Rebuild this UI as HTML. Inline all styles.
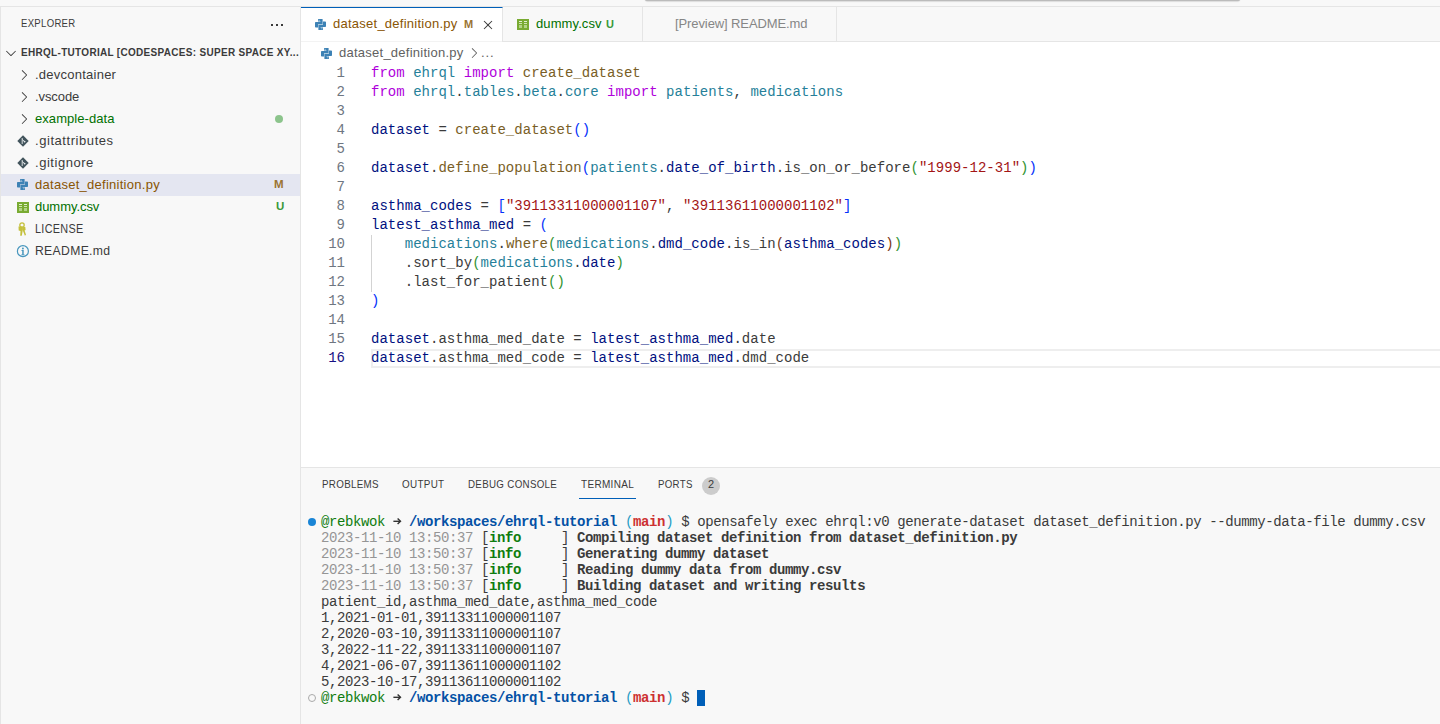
<!DOCTYPE html>
<html><head><meta charset="utf-8"><style>
*{margin:0;padding:0;box-sizing:border-box}
html,body{width:1440px;height:724px;overflow:hidden;background:#f8f8f8;font-family:"Liberation Sans",sans-serif;color:#3b3b3b}
.abs{position:absolute}
.t{position:absolute;white-space:pre;font-size:13px;line-height:22px;height:22px}
.code{position:absolute;left:371px;white-space:pre;font-family:"Liberation Mono",monospace;font-size:14px;letter-spacing:0.027px;line-height:19px;height:19px;color:#3b3b3b}
.ln{position:absolute;left:301px;width:44px;text-align:right;font-family:"Liberation Mono",monospace;font-size:14px;line-height:19px;color:#6e7681}
.ptab{position:absolute;top:474px;font-size:11px;line-height:20px;white-space:pre;color:#3b3b3b;letter-spacing:-0.5px}
.term{position:absolute;left:321px;white-space:pre;font-family:"Liberation Mono",monospace;font-size:14px;letter-spacing:-0.4px;line-height:16px;height:16px;color:#3b3b3b}
.k{color:#af00db}.ns{color:#267f99}.fn{color:#795e26}.v{color:#001080}.s{color:#a31515}
.b1{color:#0431fa}.b2{color:#319331}.b3{color:#7b3814}
</style></head><body>
<div class="abs" style="left:645px;top:-2px;width:595px;height:3.1px;background:#bbbbbb;border-radius:0 0 2px 2px;box-shadow:0 0.5px 1.2px rgba(0,0,0,.2)"></div>
<div class="abs" style="left:0;top:6px;width:1440px;height:718px;border-top:1px solid #e5e5e5;border-left:1px solid #e5e5e5"></div>
<div class="abs" style="left:1px;top:7px;width:300px;height:717px;background:#f8f8f8;border-right:1px solid #e5e5e5"></div>
<div class="abs" style="left:301px;top:42px;width:1139px;height:425px;background:#fff"></div>
<div class="abs" style="left:301px;top:467px;width:1139px;height:257px;background:#f8f8f8;border-top:1px solid #e5e5e5"></div>
<div class="abs" style="left:301px;top:7px;width:1139px;height:35px;background:#f8f8f8;border-bottom:1px solid #e5e5e5"></div>
<div class="t" style="left:21px;top:12px;font-size:11px;letter-spacing:0.35px;transform:scaleX(0.869);transform-origin:0 0">EXPLORER</div>
<div class="abs" style="left:271px;top:24px;width:2px;height:2px;background:#3b3b3b"></div>
<div class="abs" style="left:276px;top:24px;width:2px;height:2px;background:#3b3b3b"></div>
<div class="abs" style="left:281px;top:24px;width:2px;height:2px;background:#3b3b3b"></div>
<svg class="abs" style="left:3px;top:45px" width="16" height="16" viewBox="0 0 16 16"><path fill="#3b3b3b" d="M7.976 10.072l4.357-4.357.62.618L8.284 11h-.618L3 6.333l.619-.618 4.357 4.357z"/></svg>
<div class="t" style="left:21px;top:40.5px;font-size:11px;font-weight:bold;letter-spacing:0.35px;transform:scaleX(0.907);transform-origin:0 0">EHRQL-TUTORIAL [CODESPACES: SUPER SPACE XY...</div>
<svg class="abs" style="left:16px;top:67px" width="16" height="16" viewBox="0 0 16 16"><path fill="#3b3b3b" d="M10.072 8.024L5.715 3.667l.618-.62L11 7.716v.618L6.333 13l-.618-.619 4.357-4.357z"/></svg>
<div class="t" style="left:35px;top:64px;letter-spacing:0.24px">.devcontainer</div>
<svg class="abs" style="left:16px;top:89px" width="16" height="16" viewBox="0 0 16 16"><path fill="#3b3b3b" d="M10.072 8.024L5.715 3.667l.618-.62L11 7.716v.618L6.333 13l-.618-.619 4.357-4.357z"/></svg>
<div class="t" style="left:35px;top:86px;letter-spacing:-0.09px">.vscode</div>
<svg class="abs" style="left:16px;top:111px" width="16" height="16" viewBox="0 0 16 16"><path fill="#3b3b3b" d="M10.072 8.024L5.715 3.667l.618-.62L11 7.716v.618L6.333 13l-.618-.619 4.357-4.357z"/></svg>
<div class="t" style="left:35px;top:108px;color:#007100;letter-spacing:0.06px">example-data</div>
<div class="abs" style="left:275px;top:115px;width:8px;height:8px;border-radius:50%;background:#8cc48c"></div>
<svg class="abs" style="left:17px;top:135px" width="12" height="12" viewBox="0 0 12 12"><path fill="#41535b" d="M6 0.3L11.7 6 6 11.7 0.3 6z"/><path fill="none" stroke="#e8ecee" stroke-width="0.9" d="M5.2 3v6M5.2 4.5l2.3 2"/><circle cx="7.6" cy="6.6" r="0.9" fill="#e8ecee"/></svg>
<div class="t" style="left:35px;top:130px;letter-spacing:0.56px">.gitattributes</div>
<svg class="abs" style="left:17px;top:157px" width="12" height="12" viewBox="0 0 12 12"><path fill="#41535b" d="M6 0.3L11.7 6 6 11.7 0.3 6z"/><path fill="none" stroke="#e8ecee" stroke-width="0.9" d="M5.2 3v6M5.2 4.5l2.3 2"/><circle cx="7.6" cy="6.6" r="0.9" fill="#e8ecee"/></svg>
<div class="t" style="left:35px;top:152px;letter-spacing:0.53px">.gitignore</div>
<div class="abs" style="left:1px;top:174px;width:299px;height:22px;background:#e4e6f1"></div>
<svg class="abs" style="left:17px;top:179px" width="11" height="11" viewBox="0 0 11 11"><g fill="#3d82b5"><path d="M3.6 0H7.6V5.2H3.1V8.6H.8Q0 8.6 0 7.8V3.8Q0 3 .8 3H5.4V2.5H3V.6Q3 0 3.6 0z"/><path transform="rotate(180 5.5 5.5)" d="M3.6 0H7.6V5.2H3.1V8.6H.8Q0 8.6 0 7.8V3.8Q0 3 .8 3H5.4V2.5H3V.6Q3 0 3.6 0z"/></g><circle cx="4.1" cy="1.2" r=".55" fill="#cfe0ee"/><circle cx="6.9" cy="9.8" r=".55" fill="#cfe0ee"/></svg>
<div class="t" style="left:35px;top:174px;color:#895503;letter-spacing:0.27px">dataset_definition.py</div>
<div class="t" style="left:274px;top:173px;font-size:11.5px;font-weight:bold;color:#9b7433">M</div>
<svg class="abs" style="left:17px;top:202px" width="12" height="11" viewBox="0 0 12 11" shape-rendering="crispEdges"><rect x="0" y="0" width="12" height="11" fill="#79ab32"/><g fill="#e3efd2"><rect x="2" y="2" width="3" height="1"/><rect x="7" y="2" width="3" height="1"/></g><g fill="#d0e4b2"><rect x="2" y="4" width="3" height="1"/><rect x="7" y="4" width="3" height="1"/></g><g fill="#b3d387"><rect x="2" y="6" width="3" height="3"/><rect x="7" y="6" width="3" height="3"/></g></svg>
<div class="t" style="left:35px;top:196px;color:#007100;letter-spacing:-0.05px">dummy.csv</div>
<div class="t" style="left:276px;top:195px;font-size:11.5px;font-weight:bold;color:#3a993a">U</div>
<svg class="abs" style="left:17px;top:222px" width="10" height="15" viewBox="0 0 10 15"><circle cx="5" cy="3" r="2.2" fill="none" stroke="#c4c03c" stroke-width="1.3"/><path fill="#c4c03c" d="M1.5 4.5h4l.5 2.5-1.2 6.8H3.2L3.5 9 1.7 8.6z"/><path fill="#c4c03c" d="M5.5 5h2.8l.3 3-1 .6 1.4 4.2-1.1.9-1.9-4.8z"/></svg>
<div class="t" style="left:35px;top:218px;letter-spacing:0.35px;transform:scaleX(0.834);transform-origin:0 0">LICENSE</div>
<svg class="abs" style="left:16px;top:245px" width="14" height="14" viewBox="0 0 14 14"><circle cx="6.9" cy="6.15" r="5.5" fill="none" stroke="#4796bd" stroke-width="1.2"/><circle cx="6.9" cy="3.5" r="0.95" fill="#4796bd"/><path fill="#4796bd" d="M5.5 5.1h2.2v4.3h.9v.9H5.3v-.9h.9V6h-.7z"/></svg>
<div class="t" style="left:35px;top:240px;letter-spacing:0.35px;transform:scaleX(0.937);transform-origin:0 0">README.md</div>
<div class="abs" style="left:301px;top:7px;width:202px;height:34px;background:#fff;border-right:1px solid #e5e5e5;border-top:1px solid #005fb8"></div>
<div class="abs" style="left:301px;top:41px;width:201px;height:1px;background:#f3f3f3"></div>
<svg class="abs" style="left:315px;top:19px" width="11" height="11" viewBox="0 0 11 11"><g fill="#3d82b5"><path d="M3.6 0H7.6V5.2H3.1V8.6H.8Q0 8.6 0 7.8V3.8Q0 3 .8 3H5.4V2.5H3V.6Q3 0 3.6 0z"/><path transform="rotate(180 5.5 5.5)" d="M3.6 0H7.6V5.2H3.1V8.6H.8Q0 8.6 0 7.8V3.8Q0 3 .8 3H5.4V2.5H3V.6Q3 0 3.6 0z"/></g><circle cx="4.1" cy="1.2" r=".55" fill="#cfe0ee"/><circle cx="6.9" cy="9.8" r=".55" fill="#cfe0ee"/></svg>
<div class="t" style="left:333px;top:13px;color:#895503;letter-spacing:0.25px">dataset_definition.py</div>
<div class="t" style="left:464px;top:13px;color:#9b7433;font-size:11px;font-weight:bold">M</div>
<svg class="abs" style="left:480px;top:17px" width="16" height="16" viewBox="0 0 16 16"><path fill="#3b3b3b" d="M8 8.707l3.646 3.647.708-.707L8.707 8l3.647-3.646-.707-.708L8 7.293 4.354 3.646l-.707.708L7.293 8l-3.646 3.646.707.708L8 8.707z"/></svg>
<div class="abs" style="left:503px;top:7px;width:140px;height:34px;border-right:1px solid #e5e5e5"></div>
<svg class="abs" style="left:517px;top:19px" width="12" height="11" viewBox="0 0 12 11" shape-rendering="crispEdges"><rect x="0" y="0" width="12" height="11" fill="#79ab32"/><g fill="#e3efd2"><rect x="2" y="2" width="3" height="1"/><rect x="7" y="2" width="3" height="1"/></g><g fill="#d0e4b2"><rect x="2" y="4" width="3" height="1"/><rect x="7" y="4" width="3" height="1"/></g><g fill="#b3d387"><rect x="2" y="6" width="3" height="3"/><rect x="7" y="6" width="3" height="3"/></g></svg>
<div class="t" style="left:536px;top:13px;color:#007100;letter-spacing:0.1px">dummy.csv</div>
<div class="t" style="left:606px;top:13px;color:#3a993a;font-size:11px;font-weight:bold">U</div>
<div class="abs" style="left:643px;top:7px;width:194px;height:34px;border-right:1px solid #e5e5e5"></div>
<div class="t" style="left:675px;top:13px;color:#868686;letter-spacing:-0.1px">[Preview] README.md</div>
<svg class="abs" style="left:321px;top:48px" width="11" height="11" viewBox="0 0 11 11"><g fill="#3d82b5"><path d="M3.6 0H7.6V5.2H3.1V8.6H.8Q0 8.6 0 7.8V3.8Q0 3 .8 3H5.4V2.5H3V.6Q3 0 3.6 0z"/><path transform="rotate(180 5.5 5.5)" d="M3.6 0H7.6V5.2H3.1V8.6H.8Q0 8.6 0 7.8V3.8Q0 3 .8 3H5.4V2.5H3V.6Q3 0 3.6 0z"/></g><circle cx="4.1" cy="1.2" r=".55" fill="#cfe0ee"/><circle cx="6.9" cy="9.8" r=".55" fill="#cfe0ee"/></svg>
<div class="t" style="left:339px;top:42px;color:#616161;letter-spacing:0.25px">dataset_definition.py</div>
<svg class="abs" style="left:466px;top:45px" width="16" height="16" viewBox="0 0 16 16"><path fill="#616161" d="M10.072 8.024L5.715 3.667l.618-.62L11 7.716v.618L6.333 13l-.618-.619 4.357-4.357z"/></svg>
<div class="t" style="left:481px;top:42px;color:#616161;letter-spacing:0.9px">...</div>
<div class="abs" style="left:371px;top:349px;width:1069px;height:19px;border:2px solid #eeeeee;border-right:none"></div>
<div class="abs" style="left:371px;top:235px;width:1px;height:57px;background:#d3d3d3"></div>
<div class="ln" style="top:64px;color:#6e7681">1</div>
<div class="code" style="top:64px"><span class="k">from</span> <span class="ns">ehrql</span> <span class="k">import</span> <span class="fn">create_dataset</span></div>
<div class="ln" style="top:83px;color:#6e7681">2</div>
<div class="code" style="top:83px"><span class="k">from</span> <span class="ns">ehrql</span>.<span class="ns">tables</span>.<span class="ns">beta</span>.<span class="ns">core</span> <span class="k">import</span> <span class="ns">patients</span>, <span class="ns">medications</span></div>
<div class="ln" style="top:102px;color:#6e7681">3</div>
<div class="ln" style="top:121px;color:#6e7681">4</div>
<div class="code" style="top:121px"><span class="v">dataset</span> = <span class="fn">create_dataset</span><span class="b1">()</span></div>
<div class="ln" style="top:140px;color:#6e7681">5</div>
<div class="ln" style="top:159px;color:#6e7681">6</div>
<div class="code" style="top:159px"><span class="v">dataset</span>.<span class="fn">define_population</span><span class="b1">(</span><span class="ns">patients</span>.<span class="v">date_of_birth</span>.is_on_or_before<span class="b2">(</span><span class="s">"1999-12-31"</span><span class="b2">)</span><span class="b1">)</span></div>
<div class="ln" style="top:178px;color:#6e7681">7</div>
<div class="ln" style="top:197px;color:#6e7681">8</div>
<div class="code" style="top:197px"><span class="v">asthma_codes</span> = <span class="b1">[</span><span class="s">"39113311000001107"</span>, <span class="s">"39113611000001102"</span><span class="b1">]</span></div>
<div class="ln" style="top:216px;color:#6e7681">9</div>
<div class="code" style="top:216px"><span class="v">latest_asthma_med</span> = <span class="b1">(</span></div>
<div class="ln" style="top:235px;color:#6e7681">10</div>
<div class="code" style="top:235px">    <span class="ns">medications</span>.<span class="fn">where</span><span class="b2">(</span><span class="ns">medications</span>.<span class="v">dmd_code</span>.is_in<span class="b3">(</span><span class="v">asthma_codes</span><span class="b3">)</span><span class="b2">)</span></div>
<div class="ln" style="top:254px;color:#6e7681">11</div>
<div class="code" style="top:254px">    .sort_by<span class="b2">(</span><span class="ns">medications</span>.<span class="v">date</span><span class="b2">)</span></div>
<div class="ln" style="top:273px;color:#6e7681">12</div>
<div class="code" style="top:273px">    .last_for_patient<span class="b2">()</span></div>
<div class="ln" style="top:292px;color:#6e7681">13</div>
<div class="code" style="top:292px"><span class="b1">)</span></div>
<div class="ln" style="top:311px;color:#6e7681">14</div>
<div class="ln" style="top:330px;color:#6e7681">15</div>
<div class="code" style="top:330px"><span class="v">dataset</span>.asthma_med_date = <span class="v">latest_asthma_med</span>.date</div>
<div class="ln" style="top:349px;color:#171184">16</div>
<div class="code" style="top:349px"><span class="v">dataset</span>.asthma_med_code = <span class="v">latest_asthma_med</span>.dmd_code</div>
<div class="ptab" style="left:321.5px;letter-spacing:0.35px;transform:scaleX(0.89);transform-origin:0 0">PROBLEMS</div>
<div class="ptab" style="left:401.9px;letter-spacing:0.35px;transform:scaleX(0.896);transform-origin:0 0">OUTPUT</div>
<div class="ptab" style="left:468px;letter-spacing:0.35px;transform:scaleX(0.887);transform-origin:0 0">DEBUG CONSOLE</div>
<div class="ptab" style="left:581px;letter-spacing:0.35px;transform:scaleX(0.909);transform-origin:0 0">TERMINAL</div>
<div class="ptab" style="left:657.5px;letter-spacing:0.35px;transform:scaleX(0.88);transform-origin:0 0">PORTS</div>
<div class="abs" style="left:579px;top:498px;width:57px;height:1px;background:#005fb8"></div>
<div class="abs" style="left:702px;top:477px;width:18px;height:18px;border-radius:50%;background:#cccccc;color:#3b3b3b;font-size:11px;line-height:14px;text-align:center">2</div>
<div class="term" style="top:514px"><span style="color:#0f7d0f;">@rebkwok</span>   <span style="color:#0451a5;font-weight:bold;">/workspaces/ehrql-tutorial</span> <span style="color:#1f9cc4;">(</span><span style="color:#cd3131;font-weight:bold;">main</span><span style="color:#1f9cc4;">)</span> $ opensafely exec ehrql:v0 generate-dataset dataset_definition.py --dummy-data-file dummy.csv</div>
<div class="term" style="top:530px"><span style="color:#959595;">2023-11-10 13:50:37</span> [<span style="color:#0f7d0f;font-weight:bold;">info     </span>] <span style="font-weight:bold;">Compiling dataset definition from dataset_definition.py</span></div>
<div class="term" style="top:546px"><span style="color:#959595;">2023-11-10 13:50:37</span> [<span style="color:#0f7d0f;font-weight:bold;">info     </span>] <span style="font-weight:bold;">Generating dummy dataset</span></div>
<div class="term" style="top:562px"><span style="color:#959595;">2023-11-10 13:50:37</span> [<span style="color:#0f7d0f;font-weight:bold;">info     </span>] <span style="font-weight:bold;">Reading dummy data from dummy.csv</span></div>
<div class="term" style="top:578px"><span style="color:#959595;">2023-11-10 13:50:37</span> [<span style="color:#0f7d0f;font-weight:bold;">info     </span>] <span style="font-weight:bold;">Building dataset and writing results</span></div>
<div class="term" style="top:594px">patient_id,asthma_med_date,asthma_med_code</div>
<div class="term" style="top:610px">1,2021-01-01,39113311000001107</div>
<div class="term" style="top:626px">2,2020-03-10,39113311000001107</div>
<div class="term" style="top:642px">3,2022-11-22,39113311000001107</div>
<div class="term" style="top:658px">4,2021-06-07,39113611000001102</div>
<div class="term" style="top:674px">5,2023-10-17,39113611000001102</div>
<div class="term" style="top:690px"><span style="color:#0f7d0f;">@rebkwok</span>   <span style="color:#0451a5;font-weight:bold;">/workspaces/ehrql-tutorial</span> <span style="color:#1f9cc4;">(</span><span style="color:#cd3131;font-weight:bold;">main</span><span style="color:#1f9cc4;">)</span> $ </div>
<svg class="abs" style="left:393px;top:518px" width="9" height="8" viewBox="0 0 9 8"><path d="M0.4 3.3H7.2" stroke="#333" stroke-width="1.4" fill="none"/><path d="M4.6 0.5L7.5 3.3 4.6 6.1" stroke="#333" stroke-width="1.4" fill="none"/></svg>
<svg class="abs" style="left:393px;top:694px" width="9" height="8" viewBox="0 0 9 8"><path d="M0.4 3.3H7.2" stroke="#333" stroke-width="1.4" fill="none"/><path d="M4.6 0.5L7.5 3.3 4.6 6.1" stroke="#333" stroke-width="1.4" fill="none"/></svg>
<div class="abs" style="left:697px;top:690px;width:8px;height:16px;background:#005fb8"></div>
<div class="abs" style="left:308px;top:518px;width:8px;height:8px;border-radius:50%;background:#1a85d6"></div>
<div class="abs" style="left:308px;top:694px;width:8px;height:8px;border-radius:50%;border:1px solid #aaaaaa"></div>
</body></html>
